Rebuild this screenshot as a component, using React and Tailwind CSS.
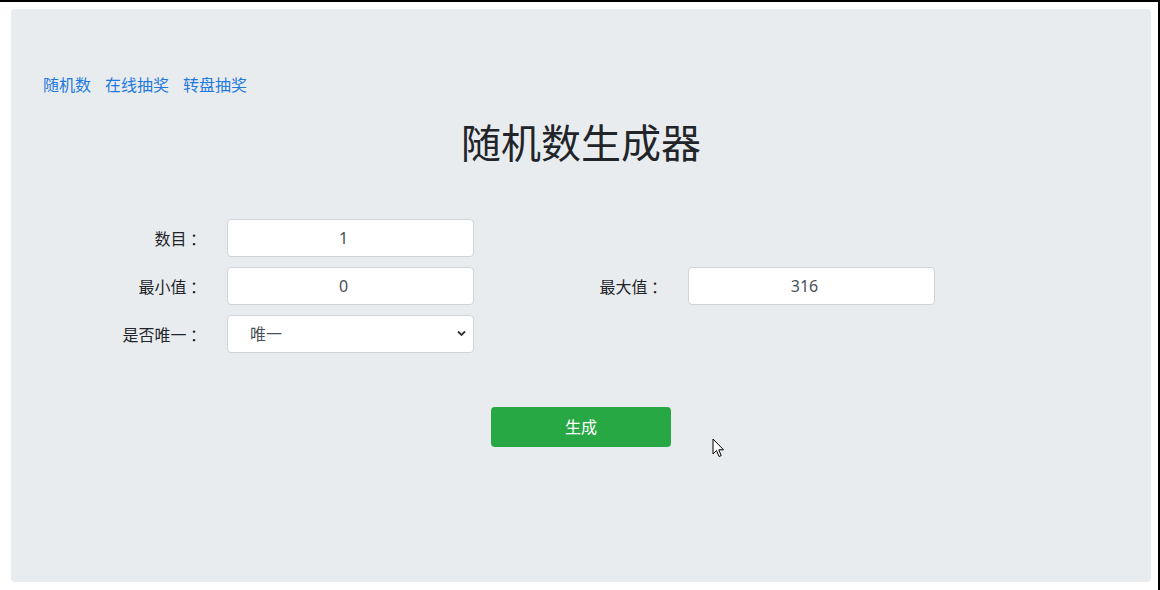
import React from "react";

function Field({ label, children }) {
  return (
    <div className="flex items-center">
      <div
        className="w-[132px] pr-[21px] text-right text-[16px] text-[#212529] leading-6"
        style={{ fontFamily: '"Noto Sans CJK SC", sans-serif' }}
      >
        {label}
      </div>
      {children}
    </div>
  );
}

function TextBox({ value }) {
  return (
    <input
      readOnly
      value={value}
      className="w-[247px] h-[38px] rounded-[4px] border border-[#ced4da] bg-white pr-[14px] text-center text-[16px] text-[#495057] outline-none"
    />
  );
}

export default function App() {
  return (
    <div
      className="relative w-[1160px] h-[590px] bg-white border-t-[2px] border-r-[2px] border-black overflow-hidden"
      style={{ fontFamily: '"Noto Sans", "Noto Sans CJK SC", sans-serif' }}
    >
      <div className="ml-[11px] mr-[7px] mt-[7px] h-[573px] rounded-[4px] bg-[#e9ecef] pt-[64px] px-[32px] flex flex-col">
        <nav className="flex gap-[14px] text-[16px] leading-6 text-[#1f7ae0]">
          <span>随机数</span>
          <span>在线抽奖</span>
          <span>转盘抽奖</span>
        </nav>
        <h1 className="mt-[22px] text-center text-[40px] leading-[48px] text-[#212529]">随机数生成器</h1>
        <div className="mt-[52px] pl-[52px] flex flex-col gap-[10px]">
          <Field label="数目 ：">
            <TextBox value="1" />
          </Field>
          <div className="flex gap-[82px]">
            <Field label="最小值 ：">
              <TextBox value="0" />
            </Field>
            <Field label="最大值 ：">
              <TextBox value="316" />
            </Field>
          </div>
          <Field label="是否唯一 ：">
            <div className="relative w-[247px] h-[38px]">
              <select className="appearance-none w-full h-full rounded-[4px] border border-[#ced4da] bg-white pl-[22px] text-[16px] text-[#495057] outline-none">
                <option>唯一</option>
              </select>
              <svg className="pointer-events-none absolute right-[8px] top-[15px]" width="9" height="7" viewBox="0 0 9 7">
                <path d="M1 1.5 L4.5 5 L8 1.5" fill="none" stroke="#333" strokeWidth="1.8" />
              </svg>
            </div>
          </Field>
        </div>
        <div className="mt-[54px] flex justify-center">
          <button className="w-[180px] h-[40px] rounded-[4px] bg-[#28a745] text-white text-[16px]">生成</button>
        </div>
      </div>
      <svg className="absolute left-[712px] top-[436px]" width="14" height="21" viewBox="0 0 14 21">
        <path d="M1 1 L1 16 L4.5 12.5 L7 18.5 L9.2 17.6 L6.8 11.8 L11.5 11.8 Z" fill="white" stroke="black" strokeWidth="1" strokeLinejoin="round" />
      </svg>
    </div>
  );
}
